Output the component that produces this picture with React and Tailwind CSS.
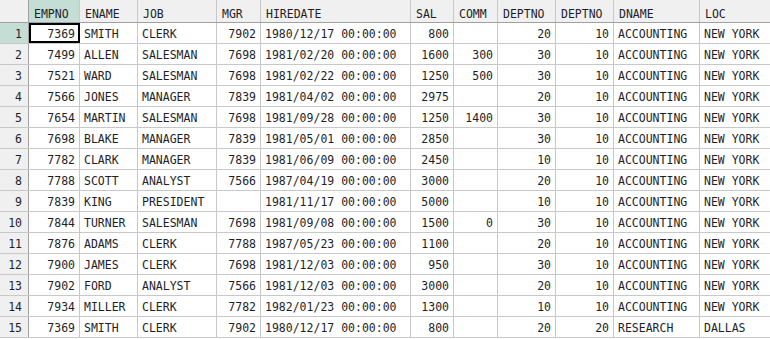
import React from "react";

const columns = [
  { key: "empno", label: "EMPNO", w: "w-[51px]", right: true },
  { key: "ename", label: "ENAME", w: "w-[58px]" },
  { key: "job", label: "JOB", w: "w-[79px]" },
  { key: "mgr", label: "MGR", w: "w-[44px]", right: true },
  { key: "hiredate", label: "HIREDATE", w: "w-[150px]" },
  { key: "sal", label: "SAL", w: "w-[43px]", right: true },
  { key: "comm", label: "COMM", w: "w-[44px]", right: true },
  { key: "deptno", label: "DEPTNO", w: "w-[58px]", right: true },
  { key: "deptno2", label: "DEPTNO", w: "w-[58px]", right: true },
  { key: "dname", label: "DNAME", w: "w-[86px]" },
  { key: "loc", label: "LOC", w: "flex-1" },
];

const rows = [
  ["7369", "SMITH", "CLERK", "7902", "1980/12/17 00:00:00", "800", "", "20", "10", "ACCOUNTING", "NEW YORK"],
  ["7499", "ALLEN", "SALESMAN", "7698", "1981/02/20 00:00:00", "1600", "300", "30", "10", "ACCOUNTING", "NEW YORK"],
  ["7521", "WARD", "SALESMAN", "7698", "1981/02/22 00:00:00", "1250", "500", "30", "10", "ACCOUNTING", "NEW YORK"],
  ["7566", "JONES", "MANAGER", "7839", "1981/04/02 00:00:00", "2975", "", "20", "10", "ACCOUNTING", "NEW YORK"],
  ["7654", "MARTIN", "SALESMAN", "7698", "1981/09/28 00:00:00", "1250", "1400", "30", "10", "ACCOUNTING", "NEW YORK"],
  ["7698", "BLAKE", "MANAGER", "7839", "1981/05/01 00:00:00", "2850", "", "30", "10", "ACCOUNTING", "NEW YORK"],
  ["7782", "CLARK", "MANAGER", "7839", "1981/06/09 00:00:00", "2450", "", "10", "10", "ACCOUNTING", "NEW YORK"],
  ["7788", "SCOTT", "ANALYST", "7566", "1987/04/19 00:00:00", "3000", "", "20", "10", "ACCOUNTING", "NEW YORK"],
  ["7839", "KING", "PRESIDENT", "", "1981/11/17 00:00:00", "5000", "", "10", "10", "ACCOUNTING", "NEW YORK"],
  ["7844", "TURNER", "SALESMAN", "7698", "1981/09/08 00:00:00", "1500", "0", "30", "10", "ACCOUNTING", "NEW YORK"],
  ["7876", "ADAMS", "CLERK", "7788", "1987/05/23 00:00:00", "1100", "", "20", "10", "ACCOUNTING", "NEW YORK"],
  ["7900", "JAMES", "CLERK", "7698", "1981/12/03 00:00:00", "950", "", "30", "10", "ACCOUNTING", "NEW YORK"],
  ["7902", "FORD", "ANALYST", "7566", "1981/12/03 00:00:00", "3000", "", "20", "10", "ACCOUNTING", "NEW YORK"],
  ["7934", "MILLER", "CLERK", "7782", "1982/01/23 00:00:00", "1300", "", "10", "10", "ACCOUNTING", "NEW YORK"],
  ["7369", "SMITH", "CLERK", "7902", "1980/12/17 00:00:00", "800", "", "20", "20", "RESEARCH", "DALLAS"],
];

function HeaderRow() {
  return (
    <div className="flex h-[23px] border-b border-[#a0a0a0] bg-[#f0f0f0]">
      <div className="w-[29px] shrink-0 border-r border-[#a0a0a0]" />
      {columns.map((c, i) => (
        <div
          key={c.key}
          className={`${c.w} shrink-0 flex items-center pl-[5px] pt-[7px] ${i < columns.length - 1 ? "border-r border-[#c8c8c8]" : ""} ${i === 0 ? "bg-[#c4ddd5]" : ""}`}
        >
          {c.label}
        </div>
      ))}
    </div>
  );
}

function DataRow({ row, index }) {
  const selected = index === 0;
  return (
    <div className="flex h-[21px] border-b border-[#c8c8c8]">
      <div
        className={`w-[29px] shrink-0 border-r border-[#a0a0a0] flex items-center justify-end pr-[6px] pt-[4px] ${selected ? "bg-[#c4ddd5]" : "bg-[#f0f0f0]"}`}
      >
        {index + 1}
      </div>
      {columns.map((c, i) => (
        <div
          key={c.key}
          className={`${c.w} shrink-0 flex items-center pt-[4px] ${c.right ? "justify-end pr-[4px]" : "pl-[4px]"} ${i < columns.length - 1 ? "border-r border-[#c8c8c8]" : ""} ${selected && i === 0 ? "outline-2 -outline-offset-2 outline-black" : ""}`}
        >
          {row[i]}
        </div>
      ))}
    </div>
  );
}

export default function App() {
  return (
    <div className="w-[770px] h-[339px] overflow-hidden bg-white text-[#1e1e28] text-[11.5px] leading-none font-['DejaVu_Sans_Mono',monospace] whitespace-nowrap">
      <HeaderRow />
      {rows.map((r, i) => (
        <DataRow key={i} row={r} index={i} />
      ))}
    </div>
  );
}
